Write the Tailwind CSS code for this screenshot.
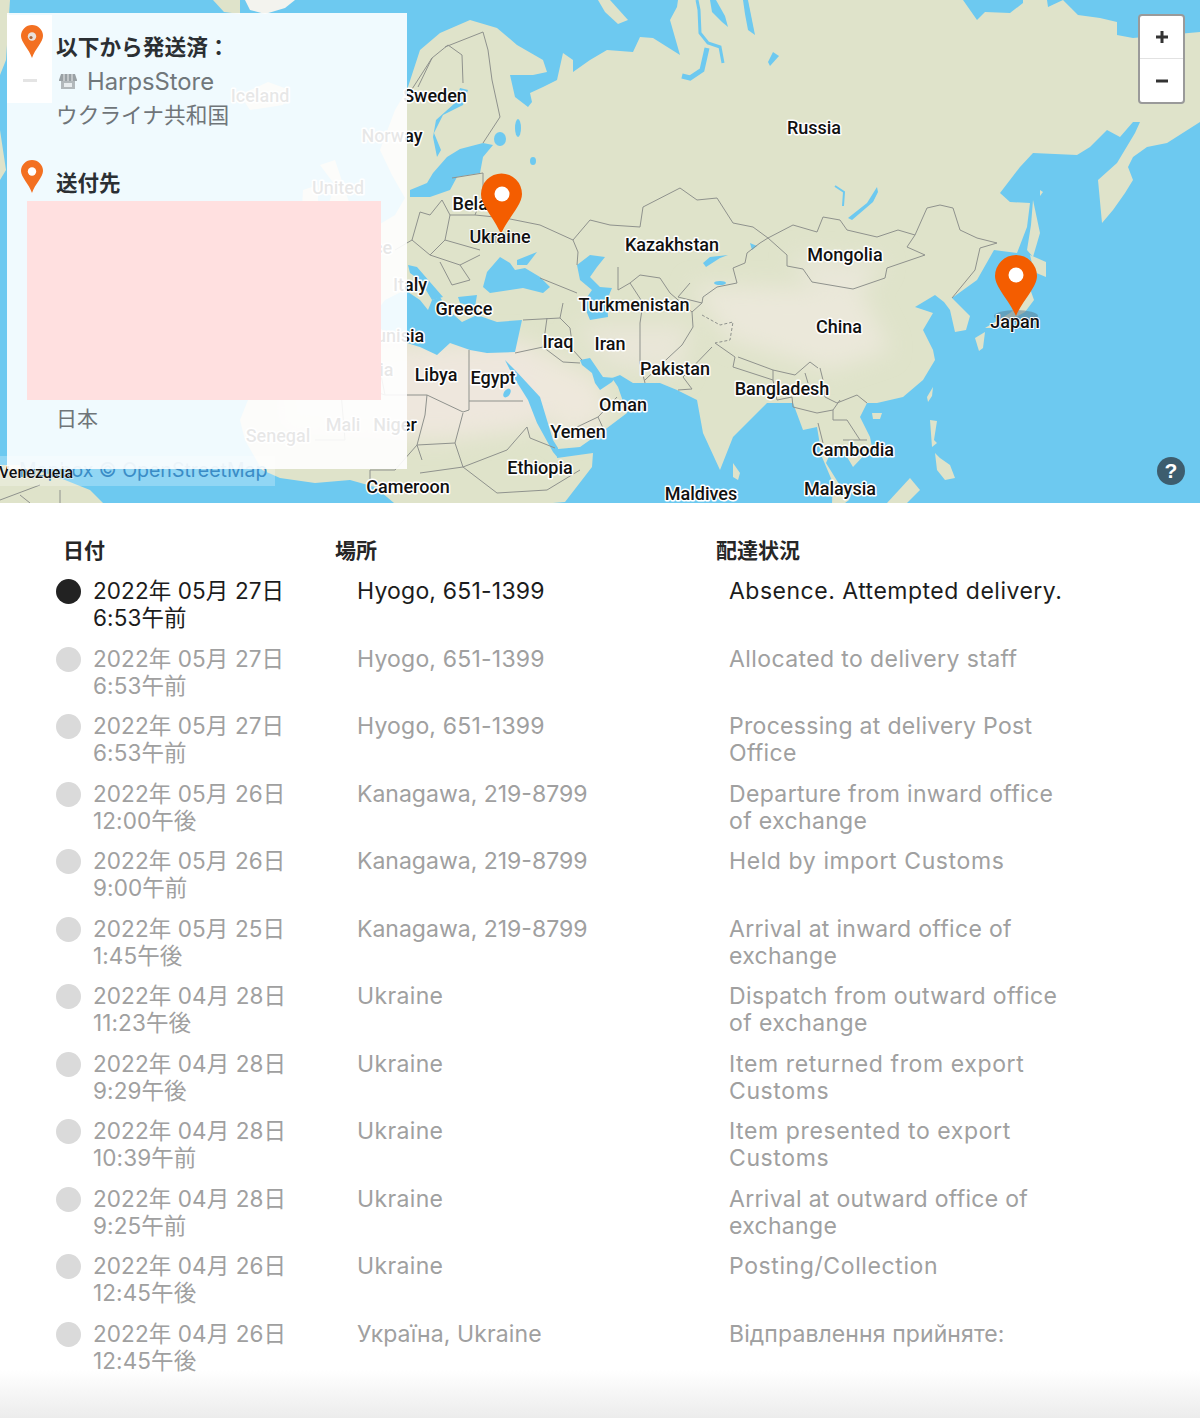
<!DOCTYPE html>
<html lang="ja">
  <head>
    <meta charset="UTF-8" />
    <title>配達状況</title>
    <script src="https://cdn.jsdelivr.net/npm/@tailwindcss/browser@4"></script>
  </head>
  <body class="bg-white font-['Inter','Noto_Sans_CJK_JP',sans-serif]">
    <div class="relative w-[1200px] h-[1418px] overflow-hidden">
      <!-- map -->
      <div class="relative h-[503px] overflow-hidden bg-[#6dc9f0]">
        <svg class="absolute inset-0" width="1200" height="503" viewBox="0 0 1200 503">
          <defs>
            <filter id="soft" x="-30%" y="-30%" width="160%" height="160%"><feGaussianBlur stdDeviation="11" /></filter>
            <clipPath id="landclip">
              <path id="main" d="M345,240 L370,230 395,215 405,198 392,175 380,150 395,110 407,90 420,50 440,33 470,20 497,28 517,45 543,60 547,72 533,75 510,75 515,97 528,107 532,102 530,93 543,87 557,80 563,53 573,60 573,72 590,60 607,50 633,52 640,37 653,38 680,55 670,20 677,7 678,0 963,0 977,20 985,12 1010,13 1023,3 1023,0 1047,0 1048,7 1063,0 1078,15 1100,18 1117,22 1117,35 1133,38 1200,32 1200,122 1167,143 1147,147 1133,157 1128,167 1133,180 1125,193 1113,210 1102,223 1098,180 1117,163 1135,133 1140,122 1133,122 1120,137 1107,130 1090,147 1077,155 1033,153 1020,167 1000,193 1010,202 1030,203 1027,227 1017,253 994,250 977,280 952,298 970,316 966,330 955,332 950,310 944,302 935,295 915,307 933,313 923,330 933,350 935,360 923,380 903,397 877,403 867,403 860,417 870,437 872,447 853,467 843,450 833,447 826,463 849,500 845,503 832,503 833,483 822,457 817,427 803,430 793,403 767,403 733,437 720,470 703,433 697,400 677,390 660,383 633,383 620,375 612,378 618,387 627,413 607,428 580,447 558,449 557,458 593,453 592,467 565,502 553,503 394,503 375,487 350,480 315,483 280,478 262,470 245,440 240,420 250,395 270,375 300,350 340,325 370,320 340,320 330,280 350,275 360,255 Z" />
            </clipPath>
          </defs>
          <use href="#main" fill="#dfe3ca" />
          <g clip-path="url(#landclip)">
            <g filter="url(#soft)">
              <path d="M280,350 L520,340 560,360 570,410 520,430 440,440 280,430 Z" fill="#eee7dd" />
              <path d="M530,345 L600,380 610,420 560,440 Z" fill="#eee8dc" />
              <path d="M690,285 L860,290 890,350 830,370 730,340 Z" fill="#ebe8da" />
              <path d="M575,325 L690,325 680,375 610,365 Z" fill="#e9e6d8" />
              <path d="M790,255 L885,262 860,292 810,285 Z" fill="#e9e7d9" />
            </g>
          </g>

          <!-- seas and lakes -->
          <g fill="#6dc9f0">
            <path d="M410,197 L430,197 450,190 457,177 480,173 483,157 493,145 483,143 460,149 447,157 433,173 427,183 410,190 Z" />
            <path d="M441,150 L434,133 443,115 463,105 468,90 460,88 455,103 436,120 433,137 437,157 Z" />
            <ellipse cx="500" cy="139" rx="6" ry="7" />
            <ellipse cx="518" cy="128" rx="3" ry="9" />
            <ellipse cx="533" cy="161" rx="3" ry="4" />
            <path d="M483,287 L487,272 500,257 510,263 515,270 525,268 540,277 550,287 543,293 523,288 510,290 490,293 Z" />
            <path d="M517,260 L537,252 527,265 517,265 Z" />
            <path d="M577,265 L590,255 605,257 597,267 590,277 600,287 612,288 607,300 608,317 590,320 583,303 592,290 580,280 Z" />
            <path d="M370,320 L385,300 405,290 420,300 428,310 432,300 440,297 448,310 462,322 477,315 497,322 522,320 515,352 487,353 470,350 450,343 437,355 420,347 407,343 385,332 Z" />
            <path d="M408,265 L417,267 443,297 432,300 420,280 410,273 Z" />
            <path d="M458,297 L477,295 475,307 460,303 Z" />
            <path d="M505,360 L515,370 540,397 553,440 558,448 558,458 553,452 537,423 528,400 513,376 Z" />
            <path d="M580,360 L590,358 603,377 615,378 612,382 600,390 595,383 592,373 582,365 Z" />
            <path d="M703,263 L710,257 728,255 720,258 706,267 Z" />
            <path d="M750,243 L757,246 752,250 Z" />
            <ellipse cx="720" cy="283" rx="6" ry="2" />
            <ellipse cx="507" cy="393" rx="3" ry="5" transform="rotate(35 507 393)" />
            <path d="M773,52 L779,56 770,66 768,62 Z" />
            <path d="M710,0 L716,0 725,16 728,27 722,22 712,12 Z" />
            <path d="M743,0 L748,0 752,20 755,35 748,30 745,14 Z" />
            <path d="M877,187 L878,192 873,202 852,220 848,218 867,203 Z" />
          </g>
          <g fill="none" stroke="#6dc9f0">
            <path d="M697,0 L699,10 700,33 708,43 720,47 723,63" stroke-width="3" />
            <path d="M707,48 L702,70 690,78 682,76" stroke-width="5" />
            <path d="M835,186 L844,192 843,206" stroke-width="2" />
          </g>

          <!-- islands -->
          <g fill="#dfe3ca">
            <path d="M245,0 L295,0 285,8 265,14 250,10 Z" fill="#f3f3ee" />
            <path d="M213,0 L240,0 240,14 224,12 Z" />
            <path d="M598,0 L610,0 628,20 618,24 605,12 Z" />
            <path d="M240,95 L268,82 290,90 283,105 250,110 Z" />
            <path d="M320,165 L335,160 350,205 325,215 335,185 Z" />
            <path d="M303,190 L318,185 318,208 302,208 Z" />
            <path d="M1033,200 L1040,233 1033,257 1027,250 1031,225 Z" />
            <path d="M1030,255 L1046,262 1046,277 1034,272 Z" />
            <path d="M1028,283 L1034,300 1025,312 996,328 985,328 1010,313 1025,300 Z" />
            <path d="M975,338 L985,332 983,348 979,351 Z" />
            <path d="M872,413 L882,413 880,419 873,419 Z" />
            <path d="M927,397 L933,387 932,396 928,402 Z" />
            <path d="M930,420 L937,421 934,440 937,443 932,447 Z" />
            <path d="M935,453 L940,458 950,465 955,478 945,480 937,470 Z" />
            <path d="M733,463 L740,473 738,480 733,477 Z" />
            <path d="M887,503 L910,478 920,490 907,503 Z" />
            <path d="M1040,190 L1043,192 1040,196 Z" />
            <path d="M0,465 L20,465 60,478 90,490 103,503 0,503 Z" />
            <path d="M0,0 L10,0 6,60 0,75 Z M0,130 L6,170 0,180 Z" />
          </g>

          <!-- borders -->
          <g fill="none" stroke="#8f928d" stroke-width="1">
            <path d="M573,240 L590,220 610,225 640,227 643,207 680,188 697,200 717,198 733,223 753,227 768,238 793,225 817,232 823,217 840,220 847,230 877,237 898,230 915,235 927,208 940,205 953,208 960,230 977,238 997,243 980,248 975,270 952,298" />
            <path d="M573,240 L578,252 577,265" />
            <path d="M768,238 L787,255 787,266 803,269 812,282 853,289 885,278 887,268 925,255 907,247 915,235" />
            <path d="M768,238 L760,243 747,253 745,263 733,268 737,283 717,287 703,297 702,303 678,297 690,283" />
            <path d="M618,267 L618,290 630,283 640,275 660,278 670,293 692,312 693,327 682,345 668,358 645,380" />
            <path d="M692,312 L702,303 M640,323 L640,363 645,383 M630,283 L643,303 640,323" />
            <path d="M712,347 L683,377 692,389 678,390" />
            <path d="M702,315 L720,325 733,322 730,340 715,343" stroke-dasharray="3 2" />
            <path d="M715,343 L735,357 733,367 773,380 777,400 792,397 793,407 M738,357 L773,370 773,380 M773,370 L795,375 810,362 818,368" />
            <path d="M820,368 L823,380 825,397 837,403 857,395 867,403 M805,373 L808,383 M793,407 L817,413 833,410 840,400 M833,410 L833,420 847,420 860,440 M843,440 L867,440 M818,423 L823,443" />
            <path d="M418,87 L432,58 448,45 462,55 463,83 M483,32 L488,50 492,80 500,117 483,143 M432,58 L405,100 M445,47 L483,32" />
            <path d="M452,178 L483,173 483,195 475,215 450,215 442,200 M442,200 L430,215 420,212 M475,215 505,218 540,225 573,240 M450,215 L445,240 480,250 M420,212 L412,240 430,255 445,240 M412,240 L395,250 M430,255 L460,265 480,255 M440,262 L452,285 470,280 M460,265 L470,280" />
            <path d="M540,278 L577,293 M523,320 L560,318 563,303 M547,318 L543,347 515,353 M560,318 L570,328 573,350 582,360 M543,347 L563,362 580,363 M577,427 L598,417 617,397 M598,417 L603,428" />
            <path d="M469,350 L469,410 463,412 427,395 407,395 M469,401 L523,401 M463,413 L455,443 463,467 507,450 527,427 530,438 555,448 M417,445 L422,460 M427,395 L425,415 417,445 395,470 M375,345 L385,395 407,395 M385,395 L340,380 M345,380 L320,395 M340,380 L345,440 315,440 M395,470 L370,470 370,485 M417,445 L455,443 M463,467 L420,473 M463,467 L497,493 547,490 580,470" />
            <path d="M0,500 L40,485 M20,495 L30,503 M60,503 L60,490" />
          </g>

          <!-- place names -->
          <g font-family="Roboto, sans-serif" font-size="18" font-weight="500" text-anchor="middle" fill="#111" stroke="#fff" stroke-width="3" stroke-linejoin="round" paint-order="stroke">
            <text x="435" y="102">Sweden</text>
            <text x="392" y="142">Norway</text>
            <text x="814" y="134">Russia</text>
            <text x="483" y="210">Belarus</text>
            <text x="672" y="251">Kazakhstan</text>
            <text x="845" y="261">Mongolia</text>
            <text x="839" y="333">China</text>
            <text x="410" y="291">Italy</text>
            <text x="464" y="315">Greece</text>
            <text x="634" y="311">Turkmenistan</text>
            <text x="558" y="348">Iraq</text>
            <text x="610" y="350">Iran</text>
            <text x="395" y="342">Tunisia</text>
            <text x="436" y="381">Libya</text>
            <text x="493" y="384">Egypt</text>
            <text x="675" y="375">Pakistan</text>
            <text x="623" y="411">Oman</text>
            <text x="782" y="395">Bangladesh</text>
            <text x="578" y="438">Yemen</text>
            <text x="395" y="431">Niger</text>
            <text x="343" y="431">Mali</text>
            <text x="278" y="442">Senegal</text>
            <text x="540" y="474">Ethiopia</text>
            <text x="853" y="456">Cambodia</text>
            <text x="408" y="493">Cameroon</text>
            <text x="701" y="500">Maldives</text>
            <text x="840" y="495">Malaysia</text>
            <text x="260" y="102">Iceland</text>
            <text x="338" y="194">United</text>
            <text x="365" y="254">France</text>
            <text x="365" y="376">Algeria</text>
          </g>

          <!-- markers -->
          <g>
            <ellipse cx="1016" cy="316" rx="22" ry="6" fill="#5b7f96" opacity="0.55" />
            <rect x="483" y="233" width="30" height="10" fill="#888" opacity="0.35" />
            <path d="M501,234 C494,218 481,205 481,194 A20.5,20.5 0 0 1 522,194 C522,205 508,218 501,234 Z" fill="#f45d00" />
            <circle cx="502" cy="194" r="7.5" fill="#fff" />
            <path d="M1016,316 C1009,300 995,287 995,276 A21,21 0 0 1 1037,276 C1037,287 1023,300 1016,316 Z" fill="#f45d00" />
            <circle cx="1016" cy="275" r="7.5" fill="#fff" />
          </g>
          <g font-family="Roboto, sans-serif" font-size="18" font-weight="500" text-anchor="middle" fill="#111" stroke="#fff" stroke-width="2" stroke-linejoin="round" paint-order="stroke">
            <text x="500" y="243">Ukraine</text>
            <text x="1015" y="328">Japan</text>
          </g>
        </svg>

        <!-- attribution under the panel -->
        <div class="absolute left-0 top-[456px] w-[275px] h-[30px] bg-white/25 pl-[19px] text-[19.5px] leading-[28px] text-[#3a8cc6] whitespace-nowrap">
          Mapbox © OpenStreetMap
        </div>
        <svg class="absolute left-0 top-[462px]" width="80" height="22" viewBox="0 0 80 22">
          <text x="36" y="16" font-family="Roboto, sans-serif" font-size="16" font-weight="500" text-anchor="middle" fill="#111" stroke="#fff" stroke-width="1" paint-order="stroke">Venezuela</text>
        </svg>

        <!-- zoom controls -->
        <div class="absolute left-[1138px] top-[14px] w-[47px] h-[90px] flex flex-col rounded-[4px] border-2 border-[#9a9a9a] bg-white">
          <div class="h-[43px] flex items-center justify-center border-b border-[#e2e2e2]">
            <svg width="14" height="14" viewBox="0 0 14 14"><path d="M7,1 V13 M1,7 H13" stroke="#333" stroke-width="3" /></svg>
          </div>
          <div class="flex-1 flex items-center justify-center">
            <svg width="14" height="14" viewBox="0 0 14 14"><path d="M1,7 H13" stroke="#333" stroke-width="3" /></svg>
          </div>
        </div>

        <!-- help -->
        <div class="absolute left-[1157px] top-[457px] w-[28px] h-[28px] rounded-full bg-[#3d5d6e] flex items-center justify-center text-white font-bold text-[21px] font-['Liberation_Sans']">?</div>

        <!-- hidden left zoom box -->
        <div class="absolute left-[7px] top-[15px] w-[45px] h-[88px] bg-white"></div>

        <!-- shipping panel -->
        <div class="absolute left-[7px] top-[13px] w-[400px] h-[456px] bg-white/90">
          <div class="relative h-full">
            <svg class="absolute left-[13px] top-[12px]" width="24" height="34" viewBox="0 0 24 34">
              <path d="M12,33 C9,24 1,17 1,11 A11,11 0 0 1 23,11 C23,17 15,24 12,33 Z" fill="#f37021" />
              <circle cx="12" cy="11.5" r="4.2" fill="#e9e2dc" />
              <circle cx="11" cy="12.5" r="1.6" fill="#a8693f" />
            </svg>
            <svg class="absolute left-[13px] top-[147px]" width="24" height="34" viewBox="0 0 24 34">
              <path d="M12,33 C9,24 1,17 1,11 A11,11 0 0 1 23,11 C23,17 15,24 12,33 Z" fill="#f37021" />
              <circle cx="12" cy="11.5" r="4.2" fill="#fff" />
            </svg>
            <div class="absolute left-[16px] top-[66px] w-[14px] h-[3px] bg-[#e4e4e4]"></div>

            <div class="pl-[49px] pt-[18px] text-[21.7px] leading-[33px] text-[#6f7579]">
              <p class="font-bold text-[#2b2f33]">以下から発送済：</p>
              <p class="flex items-center gap-[9px] mt-[1px] text-[23.8px] text-[#70777b]">
                <svg width="20" height="18" viewBox="0 0 20 18" class="ml-[2px]">
                  <path d="M3,1 H17 L19,7 V8 H1 V7 Z" fill="#9aa1a5" />
                  <path d="M3,8 H17 V16 H3 Z" fill="#b2b8bb" />
                  <path d="M6,1 V8 M10,1 V8 M14,1 V8" stroke="#fff" stroke-width="0.8" />
                  <rect x="6" y="10" width="8" height="4" fill="#e8ecee" />
                </svg>
                <span>HarpsStore</span>
              </p>
              <p class="mt-[1px]">ウクライナ共和国</p>
            </div>

            <p class="pl-[49px] pt-[35px] text-[21.5px] leading-[33px] font-bold text-[#2b2f33]">送付先</p>
            <div class="ml-[20px] mt-[1px] w-[354px] h-[199px] bg-[#ffe0e0]"></div>
            <p class="pl-[49px] pt-[2px] text-[21px] leading-[33px] text-[#6f7579]">日本</p>
          </div>
        </div>
      </div>

      <!-- tracking table -->
      <div class="grid grid-cols-[271px_381px_1fr] pl-[63px] pt-[34px] h-[75px] text-[21px] leading-[28px] font-bold text-[#262626]">
        <div>日付</div>
        <div class="pl-[1px]">場所</div>
        <div class="pl-[1px]">配達状況</div>
      </div>

      <div class="pl-[56px] text-[23px] leading-[27px] text-[#a0a0a0]">
        <div class="grid grid-cols-[37px_264px_372px_342px] h-[67.5px] text-[#1c1c1c]">
          <div class="w-[25px] h-[25px] mt-[1px] rounded-full bg-[#222222]"></div>
          <div class="-mt-[1px] text-[22.5px] tracking-[0.1px]">2022年 05月 27日<br />6:53午前</div>
          <div class="tracking-[0.2px]">Hyogo, 651-1399</div>
          <div class="tracking-[0.5px]">Absence. Attempted delivery.</div>
        </div>
        <div class="grid grid-cols-[37px_264px_372px_342px] h-[67.5px]">
          <div class="w-[25px] h-[25px] mt-[1px] rounded-full bg-[#dadada]"></div>
          <div class="-mt-[1px] text-[22.5px] tracking-[0.1px]">2022年 05月 27日<br />6:53午前</div>
          <div class="tracking-[0.2px]">Hyogo, 651-1399</div>
          <div class="tracking-[0.4px]">Allocated to delivery staff</div>
        </div>
        <div class="grid grid-cols-[37px_264px_372px_342px] h-[67.5px]">
          <div class="w-[25px] h-[25px] mt-[1px] rounded-full bg-[#dadada]"></div>
          <div class="-mt-[1px] text-[22.5px] tracking-[0.1px]">2022年 05月 27日<br />6:53午前</div>
          <div class="tracking-[0.2px]">Hyogo, 651-1399</div>
          <div class="tracking-[0.3px]">Processing at delivery Post Office</div>
        </div>
        <div class="grid grid-cols-[37px_264px_372px_342px] h-[67.5px]">
          <div class="w-[25px] h-[25px] mt-[1px] rounded-full bg-[#dadada]"></div>
          <div class="-mt-[1px] text-[22.5px] tracking-[0.1px]">2022年 05月 26日<br />12:00午後</div>
          <div class="tracking-[0px]">Kanagawa, 219-8799</div>
          <div class="tracking-[0.35px]">Departure from inward office of exchange</div>
        </div>
        <div class="grid grid-cols-[37px_264px_372px_342px] h-[67.5px]">
          <div class="w-[25px] h-[25px] mt-[1px] rounded-full bg-[#dadada]"></div>
          <div class="-mt-[1px] text-[22.5px] tracking-[0.1px]">2022年 05月 26日<br />9:00午前</div>
          <div class="tracking-[0px]">Kanagawa, 219-8799</div>
          <div class="tracking-[0.6px]">Held by import Customs</div>
        </div>
        <div class="grid grid-cols-[37px_264px_372px_342px] h-[67.5px]">
          <div class="w-[25px] h-[25px] mt-[1px] rounded-full bg-[#dadada]"></div>
          <div class="-mt-[1px] text-[22.5px] tracking-[0.1px]">2022年 05月 25日<br />1:45午後</div>
          <div class="tracking-[0px]">Kanagawa, 219-8799</div>
          <div class="tracking-[0.3px]">Arrival at inward office of exchange</div>
        </div>
        <div class="grid grid-cols-[37px_264px_372px_342px] h-[67.5px]">
          <div class="w-[25px] h-[25px] mt-[1px] rounded-full bg-[#dadada]"></div>
          <div class="-mt-[1px] text-[22.5px] tracking-[0.1px]">2022年 04月 28日<br />11:23午後</div>
          <div class="tracking-[0.35px]">Ukraine</div>
          <div class="tracking-[0.4px]">Dispatch from outward office of exchange</div>
        </div>
        <div class="grid grid-cols-[37px_264px_372px_342px] h-[67.5px]">
          <div class="w-[25px] h-[25px] mt-[1px] rounded-full bg-[#dadada]"></div>
          <div class="-mt-[1px] text-[22.5px] tracking-[0.1px]">2022年 04月 28日<br />9:29午後</div>
          <div class="tracking-[0.35px]">Ukraine</div>
          <div class="tracking-[0.6px]">Item returned from export Customs</div>
        </div>
        <div class="grid grid-cols-[37px_264px_372px_342px] h-[67.5px]">
          <div class="w-[25px] h-[25px] mt-[1px] rounded-full bg-[#dadada]"></div>
          <div class="-mt-[1px] text-[22.5px] tracking-[0.1px]">2022年 04月 28日<br />10:39午前</div>
          <div class="tracking-[0.35px]">Ukraine</div>
          <div class="tracking-[0.6px]">Item presented to export Customs</div>
        </div>
        <div class="grid grid-cols-[37px_264px_372px_342px] h-[67.5px]">
          <div class="w-[25px] h-[25px] mt-[1px] rounded-full bg-[#dadada]"></div>
          <div class="-mt-[1px] text-[22.5px] tracking-[0.1px]">2022年 04月 28日<br />9:25午前</div>
          <div class="tracking-[0.35px]">Ukraine</div>
          <div class="tracking-[0.3px]">Arrival at outward office of exchange</div>
        </div>
        <div class="grid grid-cols-[37px_264px_372px_342px] h-[67.5px]">
          <div class="w-[25px] h-[25px] mt-[1px] rounded-full bg-[#dadada]"></div>
          <div class="-mt-[1px] text-[22.5px] tracking-[0.1px]">2022年 04月 26日<br />12:45午後</div>
          <div class="tracking-[0.35px]">Ukraine</div>
          <div class="tracking-[0.6px]">Posting/Collection</div>
        </div>
        <div class="grid grid-cols-[37px_264px_372px_342px] h-[67.5px]">
          <div class="w-[25px] h-[25px] mt-[1px] rounded-full bg-[#dadada]"></div>
          <div class="-mt-[1px] text-[22.5px] tracking-[0.1px]">2022年 04月 26日<br />12:45午後</div>
          <div class="tracking-[0.1px]">Україна, Ukraine</div>
          <div class="tracking-[0.1px]">Відправлення прийняте:</div>
        </div>
      </div>

      <!-- fade at the bottom of the window -->
      <div class="absolute inset-x-0 bottom-0 h-[48px] bg-linear-to-b from-white/0 to-[#ececec]"></div>
    </div>
  </body>
</html>
